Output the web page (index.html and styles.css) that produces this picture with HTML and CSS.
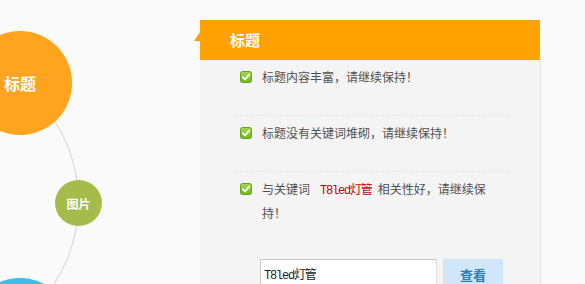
FILE: index.html
```html
<!DOCTYPE html>
<html lang="zh">
<head>
<meta charset="utf-8">
<title>标题</title>
<link rel="stylesheet" href="styles.css">
</head>
<body>
<div class="canvas">
  <svg class="arc" width="200" height="284" viewBox="0 0 200 284">
    <circle cx="-71" cy="202" r="149.5" fill="none" stroke="#d2d2d2" stroke-width="1"/>
  </svg>
  <div class="node node-title">标题</div>
  <div class="node node-pic">图片</div>
  <div class="node node-blue"></div>
</div>
<div class="panel">
  <div class="panel-head">
    <span class="notch"></span>
    <h2 class="panel-title">标题</h2>
  </div>
  <div class="panel-body">
    <ul class="checks">
      <li class="check">
        <svg class="ok" width="12" height="12" viewBox="0 0 12 12"><defs><linearGradient id="g1" x1="0" y1="0" x2="0" y2="1"><stop offset="0" stop-color="#a8d64a"/><stop offset="1" stop-color="#72b421"/></linearGradient></defs><rect x="0.5" y="0.5" width="11" height="11" rx="2" fill="url(#g1)" stroke="#64a31d"/><path d="M2.8 6.2 L5 8.4 L9.3 3.6" fill="none" stroke="#fff" stroke-width="1.8" stroke-linecap="round" stroke-linejoin="round"/></svg>
        <p class="check-text">标题内容丰富，请继续保持！</p>
      </li>
      <li class="check">
        <svg class="ok" width="12" height="12" viewBox="0 0 12 12"><rect x="0.5" y="0.5" width="11" height="11" rx="2" fill="url(#g1)" stroke="#64a31d"/><path d="M2.8 6.2 L5 8.4 L9.3 3.6" fill="none" stroke="#fff" stroke-width="1.8" stroke-linecap="round" stroke-linejoin="round"/></svg>
        <p class="check-text">标题没有关键词堆砌，请继续保持！</p>
      </li>
      <li class="check">
        <svg class="ok" width="12" height="12" viewBox="0 0 12 12"><rect x="0.5" y="0.5" width="11" height="11" rx="2" fill="url(#g1)" stroke="#64a31d"/><path d="M2.8 6.2 L5 8.4 L9.3 3.6" fill="none" stroke="#fff" stroke-width="1.8" stroke-linecap="round" stroke-linejoin="round"/></svg>
        <p class="check-text"><span>与关键词</span><span class="kw">T8led灯管</span><span>相关性好，请继续保</span><br><span>持！</span></p>
      </li>
    </ul>
    <form class="search">
      <input class="search-input" type="text" value="T8led灯管">
      <button class="search-btn" type="button">查看</button>
    </form>
  </div>
</div>
</body>
</html>
```

FILE: styles.css
```css
html, body {
  margin: 0;
  padding: 0;
}
body {
  display: flex;
  align-items: flex-start;
  width: 585px;
  height: 284px;
  overflow: hidden;
  background: #fafafa;
  font-family: "Noto Sans CJK SC", "Liberation Sans", sans-serif;
}
.canvas {
  position: relative;
  flex: 0 0 200px;
  height: 284px;
  overflow: hidden;
}
.arc {
  position: absolute;
  left: 0;
  top: 0;
}
.node {
  position: absolute;
  border-radius: 50%;
  display: flex;
  align-items: center;
  justify-content: center;
  color: #fff;
  font-weight: bold;
}
.node-title {
  left: -32px;
  top: 31px;
  width: 104px;
  height: 104px;
  background: #ffa41e;
  font-size: 16px;
}
.node-pic {
  left: 55px;
  top: 180px;
  width: 47px;
  height: 46px;
  background: #a4bc4a;
  font-size: 12px;
}
.node-blue {
  left: -32px;
  top: 278px;
  width: 104px;
  height: 104px;
  background: #3dbde8;
}
.panel {
  margin-top: 20px;
  width: 341px;
  display: flex;
  flex-direction: column;
}
.panel-head {
  position: relative;
  height: 40px;
  width: 340px;
  background: #ffa200;
  display: flex;
  align-items: center;
  padding-left: 30px;
  box-sizing: border-box;
}
.notch {
  position: absolute;
  left: -6px;
  top: 12px;
  width: 0;
  height: 0;
  border-bottom: 9px solid #ffa200;
  border-left: 6px solid transparent;
}
.panel-title {
  margin: 0;
  color: #fff;
  font-size: 15px;
  font-weight: bold;
  line-height: 20px;
}
.panel-body {
  background: #f4f4f4;
  border-right: 1px solid #e6e6e6;
  height: 230px;
}
.checks {
  list-style: none;
  margin: 0 30px;
  padding: 0;
}
.check {
  display: flex;
  align-items: flex-start;
  gap: 10px;
  padding: 6px 12px 27px 10px;
  border-bottom: 1px dashed #e2e2e2;
}
.check:last-child {
  border-bottom: none;
  padding-bottom: 0;
}
.ok {
  flex: 0 0 12px;
  margin-top: 5px;
}
.check-text {
  margin: 0;
  font-size: 12px;
  line-height: 22px;
  color: #505050;
}
.kw {
  color: #c00000;
  font-family: "Liberation Mono", "Noto Sans CJK SC", monospace;
  letter-spacing: -1.2px;
  margin: 0 6px 0 10px;
}
.search {
  display: flex;
  gap: 6px;
  margin: 35px 0 0 60px;
}
.search-input {
  width: 177px;
  height: 30px;
  box-sizing: border-box;
  margin: 0;
  padding: 0 3px;
  border: 1px solid #c8c8c8;
  border-right-color: #e0e0e0;
  background: #fff;
  font-family: "Liberation Mono", "Noto Sans CJK SC", monospace;
  font-size: 12px;
  letter-spacing: -1.2px;
  color: #222;
  outline: none;
}
.search-btn {
  width: 60px;
  height: 30px;
  margin: 0;
  padding: 0;
  border: none;
  background: #cfe7f8;
  color: #2b7db3;
  font-family: "Noto Sans CJK SC", sans-serif;
  font-size: 13px;
  font-weight: bold;
}
```
